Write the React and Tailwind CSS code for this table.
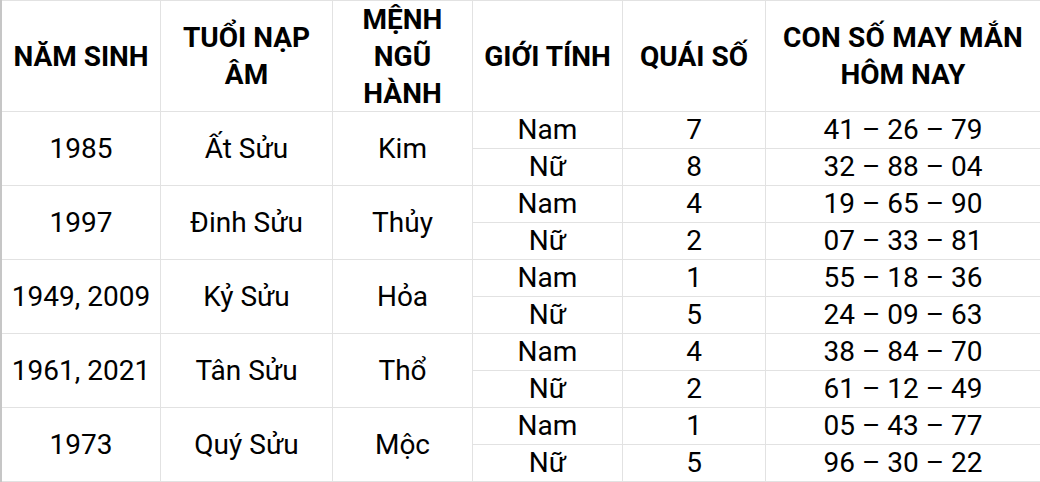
import React from "react";

const headers = [
  ["NĂM SINH"],
  ["TUỔI NẠP", "ÂM"],
  ["MỆNH", "NGŨ", "HÀNH"],
  ["GIỚI TÍNH"],
  ["QUÁI SỐ"],
  ["CON SỐ MAY MẮN", "HÔM NAY"],
];

const groups = [
  { year: "1985", age: "Ất Sửu", menh: "Kim", rows: [["Nam", "7", "41 – 26 – 79"], ["Nữ", "8", "32 – 88 – 04"]] },
  { year: "1997", age: "Đinh Sửu", menh: "Thủy", rows: [["Nam", "4", "19 – 65 – 90"], ["Nữ", "2", "07 – 33 – 81"]] },
  { year: "1949, 2009", age: "Kỷ Sửu", menh: "Hỏa", rows: [["Nam", "1", "55 – 18 – 36"], ["Nữ", "5", "24 – 09 – 63"]] },
  { year: "1961, 2021", age: "Tân Sửu", menh: "Thổ", rows: [["Nam", "4", "38 – 84 – 70"], ["Nữ", "2", "61 – 12 – 49"]] },
  { year: "1973", age: "Quý Sửu", menh: "Mộc", rows: [["Nam", "1", "05 – 43 – 77"], ["Nữ", "5", "96 – 30 – 22"]] },
];

const cell = "bg-white flex items-center justify-center text-center text-black whitespace-nowrap";

export default function App() {
  return (
    <div
      className="w-[1040px] h-[482px] overflow-hidden bg-white border-l-2 border-[#c6c6c6]"
      style={{ fontFamily: "Roboto, 'Noto Sans', sans-serif" }}
    >
      <div className="grid grid-cols-[158px_171px_139px_149px_142px_1fr] grid-rows-[110px_repeat(10,36px)] gap-px bg-[#e2e2e2] py-px">
        {headers.map((lines, i) => (
          <div key={i} className={`${cell} flex-col font-bold text-[28px] leading-[37px]`}>
            {lines.map((l) => (
              <span key={l} className={l === "CON SỐ MAY MẮN" ? "tracking-[0.2px]" : ""}>
                {l}
              </span>
            ))}
          </div>
        ))}
        {groups.map((g) => (
          <React.Fragment key={g.year}>
            <div className={`${cell} row-span-2 text-[28px]`}>{g.year}</div>
            <div className={`${cell} row-span-2 text-[28px]`}>{g.age}</div>
            <div className={`${cell} row-span-2 text-[28px]`}>{g.menh}</div>
            {g.rows.map((r, idx) => (
              <React.Fragment key={idx}>
                <div className={`${cell} text-[28px] col-start-4`}>{r[0]}</div>
                <div className={`${cell} text-[28px]`}>{r[1]}</div>
                <div className={`${cell} text-[28px]`}>{r[2]}</div>
              </React.Fragment>
            ))}
          </React.Fragment>
        ))}
      </div>
    </div>
  );
}
